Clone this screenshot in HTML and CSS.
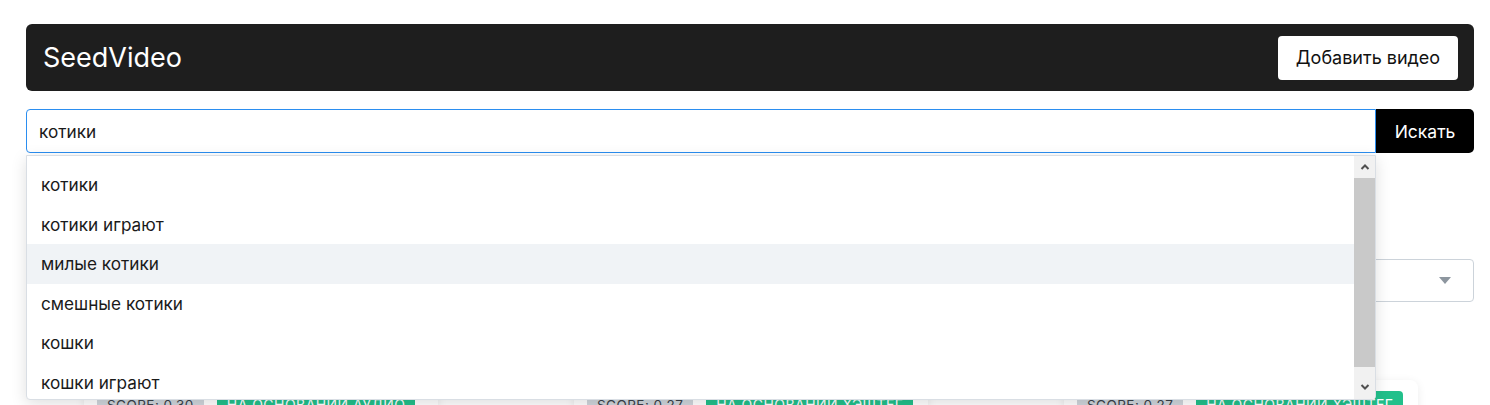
FILE: index.html
```html
<!DOCTYPE html>
<html lang="ru">
<head>
<meta charset="utf-8">
<title>SeedVideo</title>
<link rel="stylesheet" href="styles.css">
</head>
<body>
<div class="page">
  <header class="topbar">
    <div class="brand">SeedVideo</div>
    <button class="add-btn">Добавить видео</button>
  </header>

  <div class="search">
    <div class="search-field">
      <input class="search-input" type="text" value="котики">
      <div class="suggest">
        <ul class="suggest-list">
          <li class="suggest-item">котики</li>
          <li class="suggest-item">котики играют</li>
          <li class="suggest-item is-active">милые котики</li>
          <li class="suggest-item">смешные котики</li>
          <li class="suggest-item">кошки</li>
          <li class="suggest-item">кошки играют</li>
        </ul>
        <div class="sbar">
          <div class="sbar-btn sbar-up">
            <svg width="10" height="8" viewBox="0 0 10 8"><polyline points="1.5,6 5,2.5 8.5,6" fill="none" stroke="#505050" stroke-width="2"/></svg>
          </div>
          <div class="sbar-track">
            <div class="sbar-thumb"></div>
          </div>
          <div class="sbar-btn sbar-down">
            <svg width="10" height="8" viewBox="0 0 10 8"><polyline points="1.5,2 5,5.5 8.5,2" fill="none" stroke="#505050" stroke-width="2"/></svg>
          </div>
        </div>
      </div>
    </div>
    <button class="search-btn">Искать</button>
  </div>

  <div class="filters">
    <div class="select"><span class="select-text">По релевантности</span><span class="caret"></span></div>
  </div>

  <div class="cards">
    <div class="card">
      <div class="badges"><span class="badge badge-score">SCORE: 0.30</span><span class="badge badge-src">НА ОСНОВАНИИ АУДИО</span></div>
    </div>
    <div class="card">
      <div class="badges"><span class="badge badge-score">SCORE: 0.27</span><span class="badge badge-src">НА ОСНОВАНИИ ХЭШТЕГ</span></div>
    </div>
    <div class="card">
      <div class="badges"><span class="badge badge-score">SCORE: 0.27</span><span class="badge badge-src">НА ОСНОВАНИИ ХЭШТЕГ</span></div>
    </div>
  </div>
</div>
</body>
</html>
```

FILE: styles.css
```css
* { box-sizing: border-box; }

html, body {
  margin: 0;
  padding: 0;
  background: #ffffff;
  overflow: hidden;
  height: 405px;
}

body {
  font-family: Inter, "Noto Sans", "Liberation Sans", sans-serif;
  color: #1a1a1a;
}

.page {
  padding: 24px 16px 0 26px;
}

.topbar {
  display: flex;
  align-items: center;
  justify-content: space-between;
  background: #1e1e1e;
  border-radius: 6px;
  height: 67px;
  padding: 0 16px 0 17px;
}

.brand {
  color: #ffffff;
  font-size: 27px;
  font-weight: 400;
}

.add-btn {
  font-family: inherit;
  background: #ffffff;
  color: #111111;
  border: none;
  border-radius: 4px;
  height: 44px;
  width: 180px;
  font-size: 18px;
  padding: 0;
}

.search {
  display: flex;
  margin-top: 18px;
  height: 44px;
}

.search-field {
  position: relative;
  flex: 1;
  z-index: 10;
}

.search-input {
  width: 100%;
  height: 44px;
  border: 1px solid #2b8ef0;
  border-radius: 4px 0 0 4px;
  padding: 0 12px;
  font-family: inherit;
  font-size: 17.2px;
  color: #1a1a1a;
  outline: none;
}

.search-btn {
  width: 98px;
  height: 44px;
  background: #000000;
  color: #ffffff;
  border: none;
  border-radius: 0 5px 5px 0;
  font-family: inherit;
  font-size: 17.5px;
  padding: 0;
}

.suggest {
  position: absolute;
  top: 46px;
  left: 0;
  right: 0;
  height: 245px;
  background: #ffffff;
  border: 1px solid #d9dee4;
  border-radius: 0 0 4px 4px;
  box-shadow: 0 4px 16px rgba(0, 0, 0, 0.13);
  display: flex;
  overflow: hidden;
}

.suggest-list {
  list-style: none;
  margin: 0;
  padding: 9px 0 0 0;
  flex: 1;
}

.suggest-item {
  height: 39.5px;
  line-height: 39.5px;
  padding: 0 14px;
  font-size: 17.2px;
  color: #1a1a1a;
}

.suggest-item.is-active {
  background: #f0f3f6;
}

.sbar {
  width: 21px;
  display: flex;
  flex-direction: column;
  background: #f1f1f1;
}

.sbar-btn {
  height: 22px;
  display: flex;
  align-items: center;
  justify-content: center;
}

.sbar-down {
  height: 24px;
  align-items: flex-start;
  padding-top: 8px;
}

.sbar-track {
  flex: 1;
}

.sbar-thumb {
  height: 189px;
  background: #c9c9c9;
}

.filters {
  display: flex;
  justify-content: flex-end;
  margin-top: 106px;
}

.select {
  width: 320px;
  height: 43px;
  border: 1px solid #ccd3da;
  border-radius: 4px;
  display: flex;
  align-items: center;
  justify-content: space-between;
  padding: 0 22px 0 14px;
  font-size: 16px;
  color: #333;
}

.caret {
  width: 0;
  height: 0;
  border-left: 6px solid transparent;
  border-right: 6px solid transparent;
  border-top: 7px solid #8d969f;
}

.cards {
  display: flex;
  gap: 136px;
  margin-top: 78px;
  padding-left: 58px;
}

.card {
  flex: 0 0 354px;
  height: 200px;
  background: #ffffff;
  border-radius: 8px;
  box-shadow: 0 2px 10px rgba(0, 0, 0, 0.08);
  padding: 11px 13px;
}

.badges {
  display: flex;
  gap: 13px;
}

.badge {
  display: inline-block;
  height: 28px;
  line-height: 28px;
  padding: 0 10px;
  font-size: 14px;
  letter-spacing: 0.45px;
  border-radius: 4px;
  white-space: nowrap;
}

.badge-score {
  background: #cfd5db;
  color: #3a4048;
  font-size: 13.5px;
}

.badge-src {
  background: #22c08b;
  color: #ffffff;
}
```
